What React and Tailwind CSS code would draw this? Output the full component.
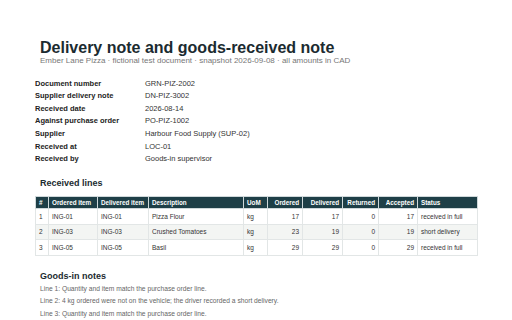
const meta = [
  ['Document number', 'GRN-PIZ-2002'],
  ['Supplier delivery note', 'DN-PIZ-3002'],
  ['Received date', '2026-08-14'],
  ['Against purchase order', 'PO-PIZ-1002'],
  ['Supplier', 'Harbour Food Supply (SUP-02)'],
  ['Received at', 'LOC-01'],
  ['Received by', 'Goods-in supervisor'],
];

const lines = [
  ['1', 'ING-01', 'ING-01', 'Pizza Flour', 'kg', 17, 17, 0, 17, 'received in full'],
  ['2', 'ING-03', 'ING-03', 'Crushed Tomatoes', 'kg', 23, 19, 0, 19, 'short delivery'],
  ['3', 'ING-05', 'ING-05', 'Basil', 'kg', 29, 29, 0, 29, 'received in full'],
];

const cols = [
  { label: '#', w: 'w-[13px]' },
  { label: 'Ordered item', w: 'w-[49px]' },
  { label: 'Delivered item', w: 'w-[51px]' },
  { label: 'Description', w: 'w-[95px]' },
  { label: 'UoM', w: 'w-[24px]' },
  { label: 'Ordered', w: 'w-[35px]', num: true },
  { label: 'Delivered', w: 'w-[40px]', num: true },
  { label: 'Returned', w: 'w-[36px]', num: true },
  { label: 'Accepted', w: 'w-[39px]', num: true },
  { label: 'Status', w: 'w-[60px]' },
];

const notes = [
  'Line 1: Quantity and item match the purchase order line.',
  'Line 2: 4 kg ordered were not on the vehicle; the driver recorded a short delivery.',
  'Line 3: Quantity and item match the purchase order line.',
];

export default function App() {
  return (
    <div className="w-[512px] h-[320px] overflow-hidden bg-white text-[#222] font-['Liberation_Sans',Arial,sans-serif]">
      <div className="pt-[39px] pl-[35px]">
        <h1 className="pl-[5px] text-[16px] leading-[17px] font-bold text-[#1b2b30]">Delivery note and goods-received note</h1>
        <p className="pl-[5px] text-[8px] leading-[10px] text-[#777]">Ember Lane Pizza · fictional test document · snapshot 2026-09-08 · all amounts in CAD</p>

        <div className="mt-[11px] flex flex-col">
          {meta.map(([k, v]) => (
            <div key={k} className="flex h-[12.6px] items-center text-[7.5px]">
              <span className="w-[110px] font-bold text-[#222]">{k}</span>
              <span className="text-[#333]">{v}</span>
            </div>
          ))}
        </div>

        <h2 className="mt-[13px] pl-[5px] text-[9px] leading-[11px] font-bold text-[#1b2b30]">Received lines</h2>
        <table className="mt-[6.5px] border-collapse table-fixed text-[6.5px]">
          <thead>
            <tr className="bg-[#1e3f47] text-white">
              {cols.map((c) => (
                <th key={c.label} className={`${c.w} h-[12.5px] px-[3px] border border-[#cfd8da] font-bold whitespace-nowrap text-[6.3px] ${c.num ? 'text-right' : 'text-left'}`}>{c.label}</th>
              ))}
            </tr>
          </thead>
          <tbody>
            {lines.map((r, i) => (
              <tr key={r[0]} className={i % 2 === 1 ? 'bg-[#f3f5f3]' : 'bg-white'}>
                {r.map((v, j) => (
                  <td key={j} className={`h-[15.5px] px-[3px] border border-[#e2e6e6] text-[#333] whitespace-nowrap ${cols[j].num ? 'text-right' : 'text-left'}`}>{v}</td>
                ))}
              </tr>
            ))}
          </tbody>
        </table>

        <h2 className="mt-[15px] pl-[5px] text-[9px] leading-[11px] font-bold text-[#1b2b30]">Goods-in notes</h2>
        <div className="mt-[1px] pl-[5px] flex flex-col text-[6.7px] text-[#666]">
          {notes.map((n) => (
            <p key={n} className="h-[12.5px] leading-[12.5px]">{n}</p>
          ))}
        </div>
      </div>
    </div>
  );
}
